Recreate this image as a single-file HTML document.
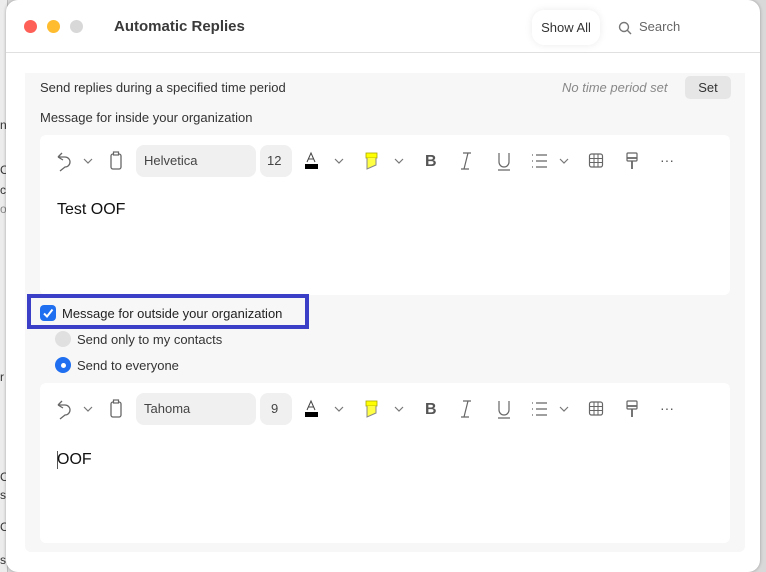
<!DOCTYPE html>
<html><head><meta charset="utf-8"><style>
*{box-sizing:border-box;margin:0;padding:0}
body{width:766px;height:572px;overflow:hidden;background:#d9d9d9;font-family:"Liberation Sans",sans-serif;color:#222;position:relative}
.leftbg{position:absolute;left:0;top:0;width:8px;height:572px;background:#ececec;border-right:1px solid #bbb}
.lt{position:absolute;left:0;font-size:12px;color:#333}
.win{position:absolute;left:6px;top:0;width:754px;height:572px;background:#fff;border-radius:12px 12px 12px 12px;overflow:hidden;box-shadow:0 0 3px rgba(0,0,0,.3)}
.dot{position:absolute;top:20px;width:13px;height:13px;border-radius:50%}
.title{position:absolute;left:108px;top:18px;font-size:15px;font-weight:bold;color:#3a3a3a}
.showall{position:absolute;left:526px;top:10px;width:68px;height:35px;border-radius:12px;background:#fff;box-shadow:0 0 8px rgba(0,0,0,.08);font-size:13px;line-height:35px;text-align:center;color:#333}
.search{position:absolute;left:612px;top:19px;font-size:13px;color:#666}
.hr{position:absolute;left:0;top:52px;width:754px;height:1px;background:#e0e0e0}
.panel{position:absolute;left:19px;top:73px;width:720px;height:479px;background:#f7f7f7;border-radius:0 0 6px 6px}
.t13{position:absolute;font-size:13px;color:#333}
.setbtn{position:absolute;left:679px;top:76px;width:46px;height:23px;background:#e6e6e6;border-radius:5px;font-size:13px;line-height:23px;text-align:center;color:#333}
.ed{position:absolute;left:34px;width:690px;height:160px;background:#fff;border-radius:6px}
.tb{position:absolute;left:0;top:0;width:690px;height:52px}
.ic{position:absolute;top:14px}
.fbox{position:absolute;top:10px;height:32px;background:#f0f0f0;border-radius:8px;font-size:13px;line-height:32px;padding-left:8px;color:#444}
.etext{position:absolute;left:17px;font-size:16px;color:#111}
.hl{position:absolute;left:21px;top:294px;width:282px;height:35px;border:4px solid #3b3fc8}
.cb{position:absolute;left:34px;top:305px;width:16px;height:16px;background:#1f6ff0;border-radius:4px}
.rad{position:absolute;width:16px;height:16px;border-radius:50%}
</style></head><body>
<div class="leftbg"></div>
<div class="lt" style="top:118px">n</div>
<div class="lt" style="top:163px">C</div>
<div class="lt" style="top:183px">c</div>
<div class="lt" style="top:202px;color:#888">o</div>
<div class="lt" style="top:370px">r</div>
<div class="lt" style="top:470px">C</div>
<div class="lt" style="top:488px">s</div>
<div class="lt" style="top:520px">C</div>
<div class="lt" style="top:553px">s</div>
<div class="win">
<div class="dot" style="left:18px;background:#fe5f57"></div>
<div class="dot" style="left:41px;background:#febc2e"></div>
<div class="dot" style="left:64px;background:#d8d8d8"></div>
<div class="title">Automatic Replies</div>
<div class="showall">Show All</div>
<svg style="position:absolute;left:612px;top:21px" width="14" height="14" viewBox="0 0 14 14"><circle cx="6" cy="6" r="4.5" fill="none" stroke="#777" stroke-width="1.4"/><line x1="9.3" y1="9.3" x2="13" y2="13" stroke="#777" stroke-width="1.4"/></svg>
<div class="search" style="left:633px">Search</div>
<div class="hr"></div>
<div class="panel"></div>
<div class="t13" style="left:34px;top:80px">Send replies during a specified time period</div>
<div class="t13" style="left:556px;top:80px;font-style:italic;color:#888">No time period set</div>
<div class="setbtn">Set</div>
<div class="t13" style="left:34px;top:110px">Message for inside your organization</div>

<div class="ed" style="top:135px">
 <div class="tb">
  <svg class="ic" style="left:14px" width="54" height="24" viewBox="0 0 54 24"><path d="M4 8 L8 4 M4 8 L9 11 M4 8 H11 A5 5 0 0 1 11 18 L6 22" fill="none" stroke="#666" stroke-width="1.3"/><path d="M30 10 L34 14 L38 10" fill="none" stroke="#777" stroke-width="1.2"/></svg>
  <svg class="ic" style="left:68px" width="16" height="24" viewBox="0 0 16 24"><rect x="3" y="5" width="10" height="15" rx="2" fill="none" stroke="#666" stroke-width="1.3"/><rect x="5.5" y="3" width="5" height="3" fill="#fff" stroke="#666" stroke-width="1.2"/></svg>
  <div class="fbox" style="left:96px;width:120px">Helvetica</div>
  <div class="fbox" style="left:220px;width:32px;padding-left:7px">12</div>
  <svg class="ic" style="left:263px" width="50" height="24" viewBox="0 0 50 24"><path d="M4 13 L8 4 L12 13 M5.5 10 H10.5" fill="none" stroke="#444" stroke-width="1"/><rect x="2" y="15" width="13" height="5" fill="#000"/><path d="M32 10 L36 14 L40 10" fill="none" stroke="#777" stroke-width="1.2"/></svg>
  <svg class="ic" style="left:323px" width="50" height="24" viewBox="0 0 50 24"><rect x="3" y="4" width="11" height="5" fill="#ffff00" stroke="#aa0" stroke-width=".8"/><path d="M4 9 V20 L13 16 V9" fill="#ffff44" stroke="#888" stroke-width="1"/><path d="M32 10 L36 14 L40 10" fill="none" stroke="#777" stroke-width="1.2"/></svg>
  <div class="ic" style="left:385px;top:18px;font-weight:bold;font-size:16px;color:#555">B</div>
  <svg class="ic" style="left:418px" width="16" height="24" viewBox="0 0 16 24"><path d="M5 4 H13 M3 20 H11 M10 4 L6 20" fill="none" stroke="#666" stroke-width="1.2"/></svg>
  <svg class="ic" style="left:456px" width="16" height="24" viewBox="0 0 16 24"><path d="M3 4 V13 A5 5 0 0 0 13 13 V4 M2 21 H14" fill="none" stroke="#666" stroke-width="1.2"/></svg>
  <svg class="ic" style="left:490px" width="46" height="24" viewBox="0 0 46 24"><path d="M2 6 H3 M2 12 H3 M2 18 H3 M6 6 H17 M6 12 H17 M6 18 H17" stroke="#666" stroke-width="1.3"/><path d="M30 10 L34 14 L38 10" fill="none" stroke="#777" stroke-width="1.2"/></svg>
  <svg class="ic" style="left:548px" width="16" height="24" viewBox="0 0 16 24"><rect x="1.5" y="5" width="13" height="13" rx="2" fill="none" stroke="#666" stroke-width="1.2"/><path d="M6 5 V18 M10 5 V18 M1.5 9.5 H14.5 M1.5 13.5 H14.5" stroke="#666" stroke-width="1"/></svg>
  <svg class="ic" style="left:584px" width="16" height="24" viewBox="0 0 16 24"><rect x="3" y="4" width="10" height="8" rx="1" fill="none" stroke="#666" stroke-width="1.2"/><path d="M3 9 H13 M8 12 V20" stroke="#666" stroke-width="1.8"/></svg>
  <div class="ic" style="left:620px;top:17px;font-size:14px;color:#555">···</div>
 </div>
 <div class="etext" style="top:66px">Test OOF</div>
</div>

<div class="hl"></div>
<div class="cb"><svg width="16" height="16" viewBox="0 0 16 16"><path d="M4 8.5 L7 11.5 L12.5 4.5" fill="none" stroke="#fff" stroke-width="2"/></svg></div>
<div class="t13" style="left:56px;top:306px;color:#222">Message for outside your organization</div>
<div class="rad" style="left:49px;top:331px;background:#e0e0e0"></div>
<div class="t13" style="left:71px;top:332px">Send only to my contacts</div>
<div class="rad" style="left:49px;top:357px;background:#1f6ff0"><div style="position:absolute;left:5.5px;top:5.5px;width:5px;height:5px;border-radius:50%;background:#fff"></div></div>
<div class="t13" style="left:71px;top:358px">Send to everyone</div>

<div class="ed" style="top:383px">
 <div class="tb">
  <svg class="ic" style="left:14px" width="54" height="24" viewBox="0 0 54 24"><path d="M4 8 L8 4 M4 8 L9 11 M4 8 H11 A5 5 0 0 1 11 18 L6 22" fill="none" stroke="#666" stroke-width="1.3"/><path d="M30 10 L34 14 L38 10" fill="none" stroke="#777" stroke-width="1.2"/></svg>
  <svg class="ic" style="left:68px" width="16" height="24" viewBox="0 0 16 24"><rect x="3" y="5" width="10" height="15" rx="2" fill="none" stroke="#666" stroke-width="1.3"/><rect x="5.5" y="3" width="5" height="3" fill="#fff" stroke="#666" stroke-width="1.2"/></svg>
  <div class="fbox" style="left:96px;width:120px">Tahoma</div>
  <div class="fbox" style="left:220px;width:32px;padding-left:11px">9</div>
  <svg class="ic" style="left:263px" width="50" height="24" viewBox="0 0 50 24"><path d="M4 13 L8 4 L12 13 M5.5 10 H10.5" fill="none" stroke="#444" stroke-width="1"/><rect x="2" y="15" width="13" height="5" fill="#000"/><path d="M32 10 L36 14 L40 10" fill="none" stroke="#777" stroke-width="1.2"/></svg>
  <svg class="ic" style="left:323px" width="50" height="24" viewBox="0 0 50 24"><rect x="3" y="4" width="11" height="5" fill="#ffff00" stroke="#aa0" stroke-width=".8"/><path d="M4 9 V20 L13 16 V9" fill="#ffff44" stroke="#888" stroke-width="1"/><path d="M32 10 L36 14 L40 10" fill="none" stroke="#777" stroke-width="1.2"/></svg>
  <div class="ic" style="left:385px;top:18px;font-weight:bold;font-size:16px;color:#555">B</div>
  <svg class="ic" style="left:418px" width="16" height="24" viewBox="0 0 16 24"><path d="M5 4 H13 M3 20 H11 M10 4 L6 20" fill="none" stroke="#666" stroke-width="1.2"/></svg>
  <svg class="ic" style="left:456px" width="16" height="24" viewBox="0 0 16 24"><path d="M3 4 V13 A5 5 0 0 0 13 13 V4 M2 21 H14" fill="none" stroke="#666" stroke-width="1.2"/></svg>
  <svg class="ic" style="left:490px" width="46" height="24" viewBox="0 0 46 24"><path d="M2 6 H3 M2 12 H3 M2 18 H3 M6 6 H17 M6 12 H17 M6 18 H17" stroke="#666" stroke-width="1.3"/><path d="M30 10 L34 14 L38 10" fill="none" stroke="#777" stroke-width="1.2"/></svg>
  <svg class="ic" style="left:548px" width="16" height="24" viewBox="0 0 16 24"><rect x="1.5" y="5" width="13" height="13" rx="2" fill="none" stroke="#666" stroke-width="1.2"/><path d="M6 5 V18 M10 5 V18 M1.5 9.5 H14.5 M1.5 13.5 H14.5" stroke="#666" stroke-width="1"/></svg>
  <svg class="ic" style="left:584px" width="16" height="24" viewBox="0 0 16 24"><rect x="3" y="4" width="10" height="8" rx="1" fill="none" stroke="#666" stroke-width="1.2"/><path d="M3 9 H13 M8 12 V20" stroke="#666" stroke-width="1.8"/></svg>
  <div class="ic" style="left:620px;top:17px;font-size:14px;color:#555">···</div>
 </div>
 <div style="position:absolute;left:17px;top:68px;width:1px;height:18px;background:#555"></div>
 <div class="etext" style="top:68px">OOF</div>
</div>
</div>
</body></html>
